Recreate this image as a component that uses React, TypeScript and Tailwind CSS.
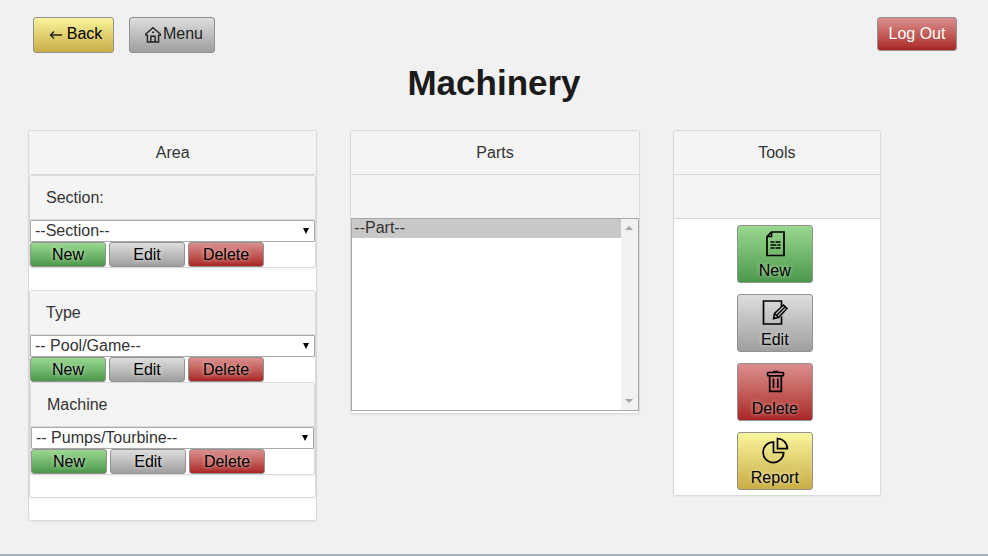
import type { ReactNode } from "react";

const tones = {
  green: "bg-linear-to-b from-[#9ad890] to-[#4b984b]",
  gray: "bg-linear-to-b from-[#dedede] to-[#9f9f9f]",
  red: "bg-linear-to-b from-[#da8e8e] to-[#a92424]",
  yellow: "bg-linear-to-b from-[#f9f59c] to-[#c9ad44]",
};

type Tone = keyof typeof tones;

const frame = "rounded-[3px] border border-[#929292]";
const glow = "text-shadow-[0_0_4px_#ffffffb0]";

function SmallButton({ tone, children }: { tone: Tone; children: ReactNode }) {
  return (
    <button type="button" className={`${frame} ${tones[tone]} ${glow} h-[25px] w-[76px] text-center leading-[23px] text-black`}>
      {children}
    </button>
  );
}

function ToolButton({ tone, label, children }: { tone: Tone; label: string; children: ReactNode }) {
  return (
    <button type="button" className={`${frame} ${tones[tone]} ${glow} flex h-[58px] w-[76px] flex-col items-center justify-between pt-1 text-black`}>
      <svg width="28" height="28" viewBox="0 0 28 28" fill="none" stroke="black" strokeWidth="1.7" aria-hidden="true">
        {children}
      </svg>
      <span className="leading-[23px]">{label}</span>
    </button>
  );
}

function Panel({ className = "", children }: { className?: string; children: ReactNode }) {
  return <section className={`rounded-[3px] border border-[#dadada] bg-white shadow-xs ${className}`}>{children}</section>;
}

function Heading({ children }: { children: ReactNode }) {
  return <h2 className="h-11 rounded-t-[3px] border-b border-[#dadada] bg-[#f4f4f4] text-center leading-[43px]">{children}</h2>;
}

function Picker({ id, label, option, children }: { id: string; label: string; option: string; children?: ReactNode }) {
  return (
    <Panel>
      <label htmlFor={id} className="block h-11 rounded-t-[3px] border-b border-[#dadada] bg-[#f4f4f4] px-4 leading-[43px]">
        {label}
      </label>
      <div className="relative">
        <select id={id} className="block h-[22px] w-full appearance-none rounded-[1px] border border-[#a9a9a9] bg-white px-1 leading-5">
          <option>{option}</option>
        </select>
        <svg className="pointer-events-none absolute top-2 right-[6px]" width="6" height="6" viewBox="0 0 6 6" aria-hidden="true">
          <path d="M0 0h6L3 6z" fill="black" />
        </svg>
      </div>
      <div className="flex gap-[3px]">
        <SmallButton tone="green">New</SmallButton>
        <SmallButton tone="gray">Edit</SmallButton>
        <SmallButton tone="red">Delete</SmallButton>
      </div>
      {children}
    </Panel>
  );
}

export default function App() {
  return (
    <div className="flex min-h-screen flex-col bg-[#f1f1f1] font-['Liberation_Sans',Arial,sans-serif] text-[16px] text-[#333]">
      <header className="flex items-start justify-between pt-[17px] pr-[31px] pl-[33px]">
        <nav className="flex gap-[15px]">
          <button type="button" className={`${frame} ${tones.yellow} flex h-9 w-[81px] items-center justify-center gap-1 pb-[2px] pl-1 leading-5 text-black`}>
            <svg width="14" height="12" viewBox="0 0 14 12" fill="none" stroke="#222" strokeWidth="1.4" aria-hidden="true">
              <path d="M1.5 7H13M5 3.5L1.500 7L5 10.500" />
            </svg>
            Back
          </button>
          <button type="button" className={`${frame} ${tones.gray} flex h-9 w-[86px] items-center justify-center gap-[2px] pb-[2px] pl-1 leading-5 text-[#222]`}>
            <svg width="16" height="17" viewBox="0 0 16 17" fill="none" stroke="#222" strokeWidth="1.4" aria-hidden="true">
              <path d="M.7 9.3V8L8 1.6L15.3 8V9.3H13.6V16H10.1V10.3H5.9V16H2.4V9.3H.7M5.9 16H10.1M7 6.2H9" />
            </svg>
            Menu
          </button>
        </nav>
        <button type="button" className={`${frame} ${tones.red} h-[34px] w-20 leading-8 text-white`}>
          Log Out
        </button>
      </header>

      <h1 className="mb-[17px] text-center text-[35px] leading-[60px] font-bold text-[#1b1b1b]">Machinery</h1>

      <main className="grid grid-cols-3 items-start gap-[33px] pr-[26px] pl-7">
        <Panel className="pb-[22px]">
          <Heading>Area</Heading>
          <div className="flex flex-col gap-[22px]">
            <Picker id="section" label="Section:" option="--Section--" />
            <Picker id="type" label="Type" option="-- Pool/Game--">
              <div className="mb-[22px]">
                <Picker id="machine" label="Machine" option="-- Pumps/Tourbine--" />
              </div>
            </Picker>
          </div>
        </Panel>

        <Panel className="pb-[2px]">
          <Heading>Parts</Heading>
          <div className="h-[43px] bg-[#f4f4f4]" />
          <div className="flex h-[193px] border border-[#a9a9a9] bg-white">
            <select aria-label="Parts" size={10} defaultValue="part" className="h-full min-w-0 flex-1 appearance-none overflow-hidden bg-white">
              <option value="part" className="h-[19px] min-h-0 bg-[#c8c8c8] px-[2px] py-0 leading-[19px] text-[#333]">
                --Part--
              </option>
            </select>
            <div className="flex w-[17px] flex-col items-center justify-between bg-[#f1f1f1] py-[7px]" aria-hidden="true">
              <svg width="8" height="4" viewBox="0 0 8 4">
                <path d="M0 4h8L4 0z" fill="#a3a3a3" />
              </svg>
              <svg width="8" height="4" viewBox="0 0 8 4">
                <path d="M0 0h8L4 4z" fill="#a3a3a3" />
              </svg>
            </div>
          </div>
        </Panel>

        <Panel className="w-[72%]">
          <Heading>Tools</Heading>
          <div className="h-11 border-b border-[#dadada] bg-[#f4f4f4]" />
          <div className="flex flex-col items-center gap-[11px] pt-[6px] pr-1 pb-[5px]">
            <ToolButton tone="green" label="New">
              <path d="M10.5 2H23V25.5H6V6.5zM10.5 2V6.5H6" />
              <path d="M9.5 12H13.5M14.5 12H19.5M9.5 15H15.5M16.5 15H19.5M9.5 18H13.5M14.500 18H19.5" strokeWidth="1.5" />
            </ToolButton>
            <ToolButton tone="gray" label="Edit">
              <path d="M20.500 8V2H2.500V25H20.500V17.500" />
              <path d="M12.500 19.500L13.500 14.500L22.500 6L26 9.500L17.500 18.500zM13.500 14.500L17.500 18.500M15.500 16.500L24 8" strokeWidth="1.500" />
              <path d="M12 20.500L12.800 17L15.500 19.500z" fill="black" stroke="none" />
            </ToolButton>
            <ToolButton tone="red" label="Delete">
              <rect x="6.500" y="4.500" width="16" height="3.300" rx="1" />
              <path d="M8.700 8V23.300H20.300V8M12.500 10.500V20M16.800 10.500V20M12 3.700H17" />
            </ToolButton>
            <ToolButton tone="yellow" label="Report">
              <path d="M12.500 5A10.300 10.300 0 1 0 22.700 15.500H12.500z" />
              <path d="M16.500 1.500A10 10 0 0 1 26.300 11.700H16.500z" />
            </ToolButton>
          </div>
        </Panel>
      </main>

      <footer className="mt-auto h-[2px] bg-[#a1b5c1]" />
    </div>
  );
}
